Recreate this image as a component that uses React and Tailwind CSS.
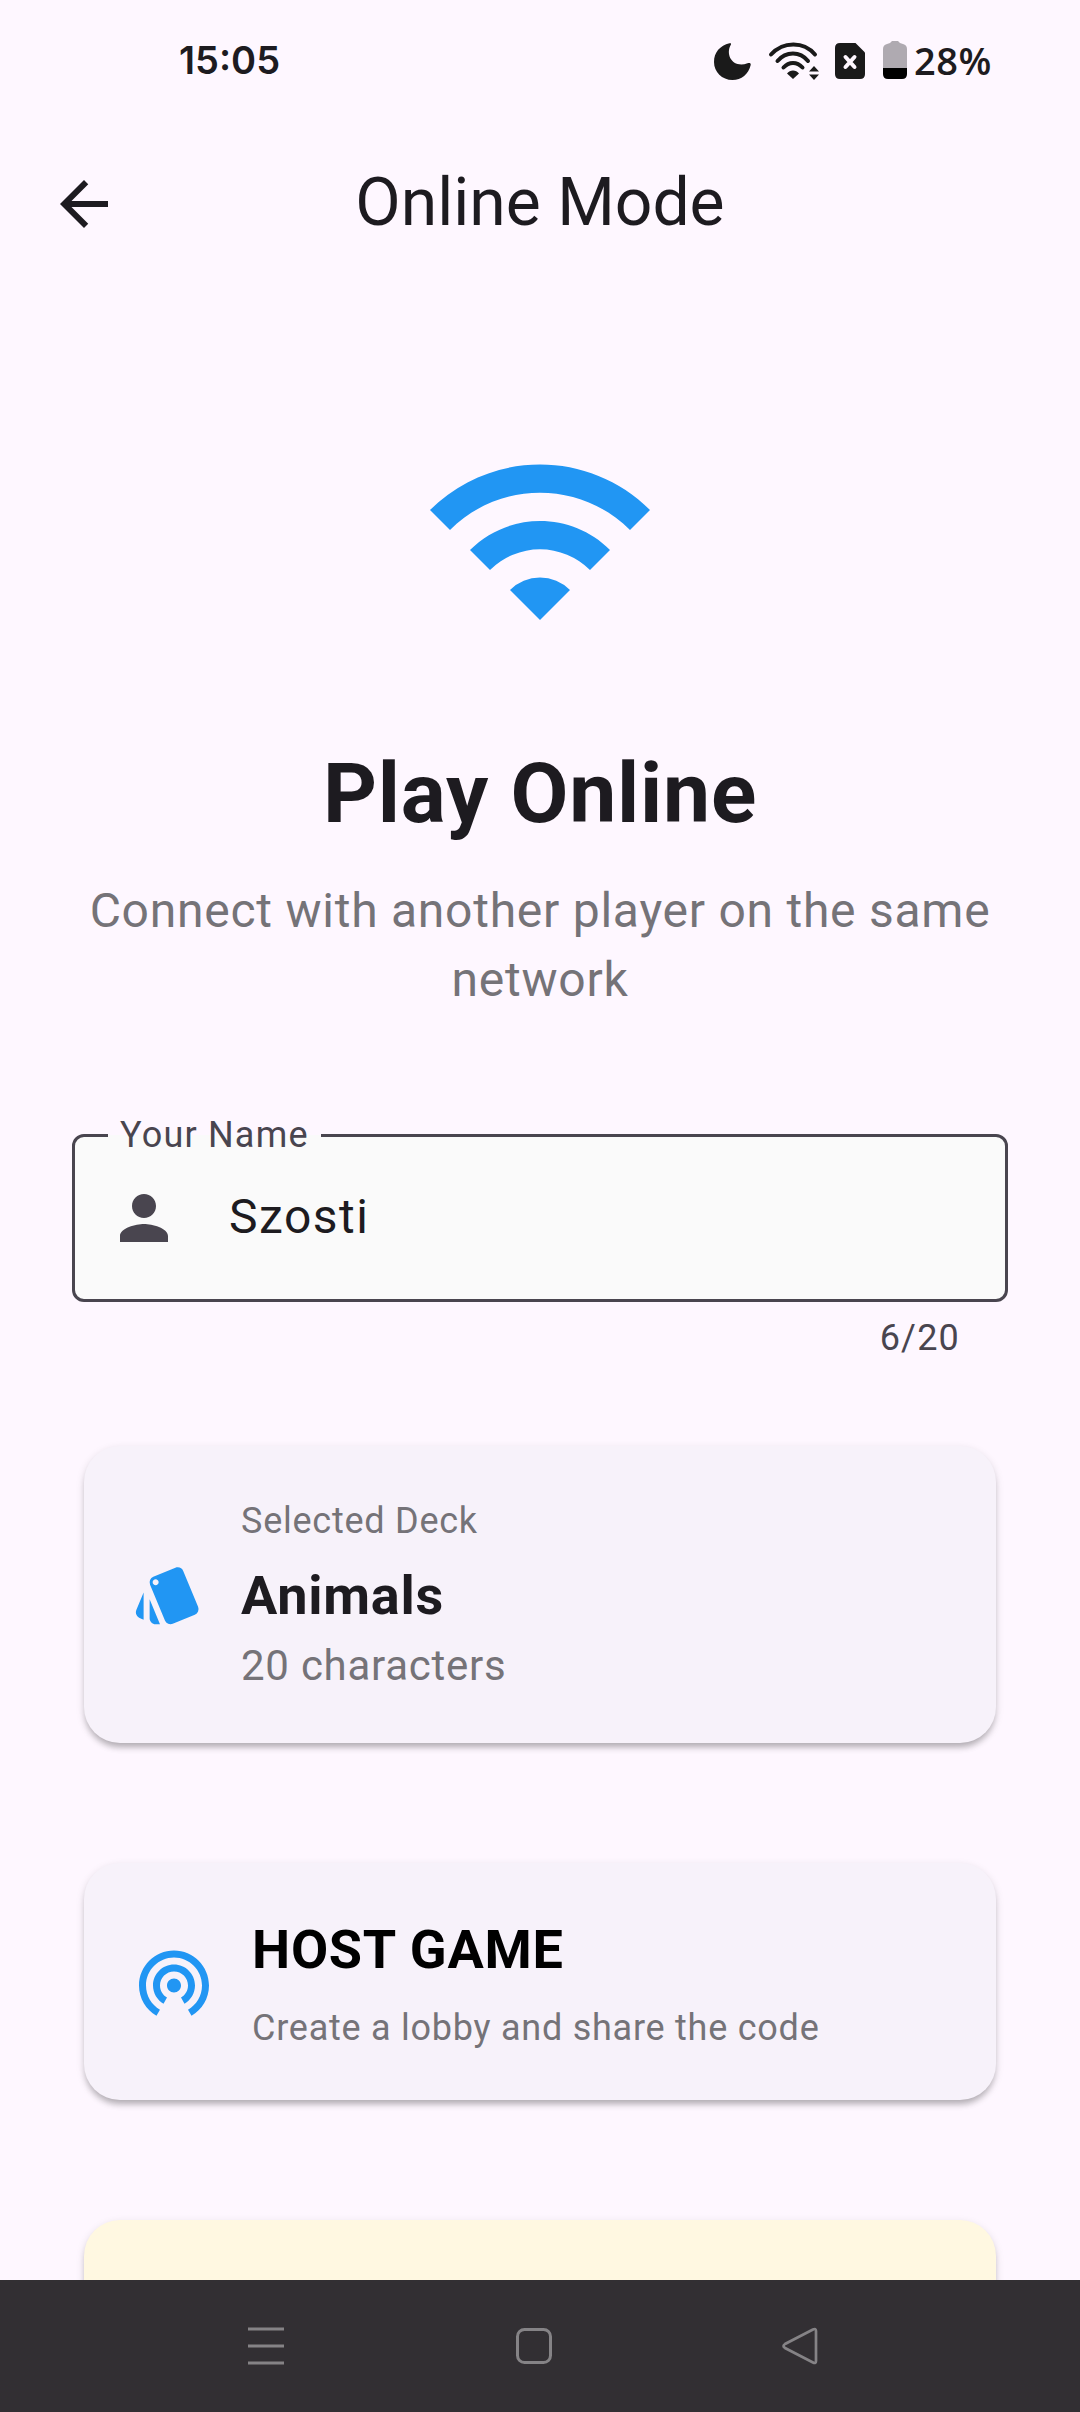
import { MdArrowBack, MdPerson, MdStyle, MdWifi, MdWifiTethering } from "react-icons/md";

const SignalIcon = () => (
  <svg width="52" height="38" viewBox="0 0 52 38" fill="none" stroke="#1a1a1a" strokeWidth="4" strokeLinecap="round">
    <path d="M3 12.5C15 -1 36 -1 47 12.5" />
    <path d="M9.5 19C18 9 32 9 40 19" />
    <path d="M15.5 25.5C21 19.5 29 19.5 34.5 25.5" />
    <path d="M19 31.5C22 27.5 28 27.5 31 31.5L25 37Z" fill="#1a1a1a" stroke="none" />
    <path d="M41 29.5L46 24L51 29.5ZM41 32.5L46 38L51 32.5Z" fill="#1a1a1a" stroke="none" />
  </svg>
);

const StatusBar = () => (
  <div className="flex h-[120px] items-center pt-[2px] pl-[179px] text-[#1d1b20]">
    <span className="w-[535px] pb-[2px] font-['Inter',sans-serif] text-[38px] leading-none font-semibold">15:05</span>
    <svg width="37" height="37" viewBox="0 0 37 37" fill="#1a1a1a">
      <path d="M15.5 0.3C17 0 17.5 0.7 16.8 1.7C11 12 19 25.5 33.5 20.3C35.5 19.6 37 20 36.7 22C34.5 31 27.5 37 18.5 37C8 37 0 29 0 19C0 9.5 6 2.5 15.5 0.3Z" />
    </svg>
    <div className="ml-[17px]">
      <SignalIcon />
    </div>
    <svg className="ml-[15px]" width="30" height="36" viewBox="0 0 30 36">
      <path d="M5 0H20.5L30 9.5V31Q30 36 25 36H5Q0 36 0 31V5Q0 0 5 0Z" fill="#1a1a1a" />
      <path d="M10.5 14L19.5 24M19.5 14L10.5 24" stroke="#fef7ff" strokeWidth="4" strokeLinecap="round" />
    </svg>
    <svg className="mb-[2px] ml-[18px]" width="24" height="38" viewBox="0 0 24 38">
      <path d="M9 0H15Q17 3 20 3Q24 4 24 8V27H0V8Q0 4 4 3Q7 3 9 0Z" fill="#afaab1" />
      <path d="M0 27H24V33Q24 38 19 38H5Q0 38 0 33Z" fill="#000" />
    </svg>
    <span className="ml-[7px] pb-[2px] font-['Open_Sans',sans-serif] text-[38px] leading-none font-semibold tracking-[0.5px]">
      28%
    </span>
  </div>
);

const AppBar = () => (
  <header className="grid h-[168px] grid-cols-[168px_1fr_168px] items-center">
    <MdArrowBack size={72} className="ml-[48px]" />
    <h1 className="pb-[2px] text-center text-[66px] leading-[84px]">Online Mode</h1>
  </header>
);

const Card = ({ className, children }) => (
  <section
    className={`mx-[12px] flex shrink-0 items-center rounded-[36px] shadow-[0_6px_6px_-2px_rgba(0,0,0,0.22),0_3px_9px_rgba(0,0,0,0.13)] ${className}`}
  >
    {children}
  </section>
);

const NameField = () => (
  <div className="mt-[120px]">
    <fieldset className="relative h-[168px] rounded-[12px] border-3 border-[#49454f] bg-[#fafafa]">
      <div className="flex h-full items-center">
        <MdPerson size={72} className="ml-[33px] text-[#49454f]" />
        <span className="ml-[49px] pb-[2px] text-[48px] leading-[72px] tracking-[1.5px]">Szosti</span>
      </div>
      <span className="absolute -top-[26px] left-[33px] bg-[linear-gradient(#fef7ff_50%,#fafafa_50%)] px-[12px] text-[36px] leading-[48px] tracking-[1.2px] text-[#49454f]">
        Your Name
      </span>
    </fieldset>
    <p className="mt-[12px] pr-[48px] text-right text-[36px] leading-[48px] tracking-[1.2px] text-[#49454f]">6/20</p>
  </div>
);

const NavBar = () => (
  <nav className="flex h-[132px] shrink-0 items-center bg-[#322f33]">
    <svg className="ml-[248px]" width="36" height="38" viewBox="0 0 36 38" stroke="#858386" strokeWidth="3">
      <path d="M0 2H36M0 19H36M0 36H36" />
    </svg>
    <svg className="ml-[232px]" width="36" height="38" viewBox="0 0 36 38" fill="none" stroke="#858386" strokeWidth="3">
      <rect x="1.5" y="2.5" width="33" height="33" rx="7" />
    </svg>
    <svg className="ml-[230px]" width="36" height="38" viewBox="0 0 36 38" fill="none" stroke="#858386" strokeWidth="2.7">
      <path d="M31 2.5Q34 1 34 4V34Q34 37 31 35.5L3 21Q0 19 3 17Z" />
    </svg>
  </nav>
);

export default function App() {
  return (
    <div className="flex h-[2412px] w-[1080px] flex-col overflow-hidden bg-[#fef7ff] font-[Roboto,sans-serif] text-[#1d1b20]">
      <StatusBar />
      <AppBar />
      <main className="flex h-[1992px] flex-col overflow-hidden px-[72px] pt-[132px]">
        <MdWifi size={240} className="shrink-0 self-center text-[#2196f3]" />
        <h2 className="mt-[86px] text-center text-[84px] leading-[96px] font-bold tracking-[0.75px]">Play Online</h2>
        <p className="mt-[34px] text-center text-[48px] leading-[69px] tracking-[0.75px] text-[#757378]">
          Connect with another player on the same network
        </p>
        <NameField />

        <Card className="mt-[84px] h-[297px] bg-[#f7f2fa] pl-[48px]">
          <MdStyle size={72} className="text-[#2196f3]" />
          <div className="ml-[37px] pt-[4px]">
            <p className="text-[36px] leading-[48px] tracking-[0.75px] text-[#757378]">Selected Deck</p>
            <p className="mt-[12px] text-[54px] leading-[77px] font-bold tracking-[0.75px]">Animals</p>
            <p className="mt-[2px] text-[42px] leading-[60px] tracking-[0.75px] text-[#757378]">20 characters</p>
          </div>
        </Card>

        <Card className="mt-[120px] h-[237px] bg-[#f7f2fa] pl-[48px]">
          <MdWifiTethering size={84} className="text-[#2196f3]" />
          <div className="ml-[36px] pt-[2px]">
            <p className="text-[54px] leading-[77px] font-bold tracking-[0.75px] text-black">HOST GAME</p>
            <p className="mt-[15px] text-[36px] leading-[51px] tracking-[0.75px] text-[#757378]">
              Create a lobby and share the code
            </p>
          </div>
        </Card>

        <Card className="mt-[120px] h-[237px] bg-[#fff8e1]" />
      </main>
      <NavBar />
    </div>
  );
}
